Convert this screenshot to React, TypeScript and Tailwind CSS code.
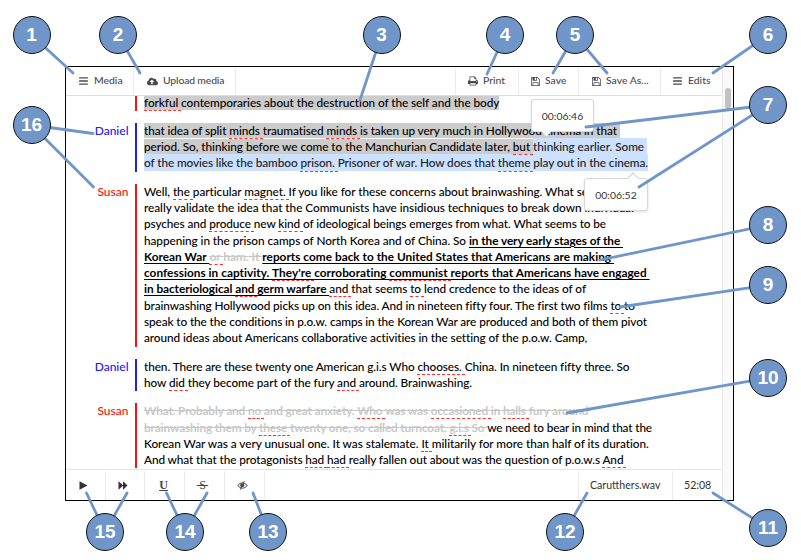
import React, { useLayoutEffect, useRef } from "react";
import { FaBars, FaCloudUploadAlt } from "react-icons/fa";

type Mark = "plain" | "err" | "read" | "readErr" | "sel" | "selErr" | "strong" | "strongErr" | "del" | "delErr";
type Line = { w?: number; runs: [Mark, string][] };
type Block = { who: "Daniel" | "Susan" | ""; lines: Line[] };

const markClass: Record<Mark, string> = {
  plain: "",
  err: "relative",
  read: "bg-[#cccccc]",
  readErr: "relative bg-[#cccccc]",
  sel: "bg-[#cce0ff] py-[1px] text-[#222]",
  selErr: "relative bg-[#cce0ff] py-[1px] text-[#222]",
  strong: "font-bold underline underline-offset-[1.5px] decoration-1",
  strongErr: "relative font-bold underline underline-offset-[1.5px] decoration-1",
  del: "font-bold text-[#c8c8c8] line-through",
  delErr: "relative font-bold text-[#c8c8c8] line-through",
};

const blocks: Block[] = [
  { who: "", lines: [{ w: 355.5, runs: [["readErr", "forkful "], ["read", "contemporaries about the destruction of the self and the body"]] }] },
  {
    who: "Daniel",
    lines: [
      { w: 476, runs: [["read", "that idea of split "], ["readErr", "minds "], ["read", "traumatised "], ["readErr", "minds "], ["read", "is taken up very much in Hollywood cinema in that "]] },
      { w: 503, runs: [["read", "period. So, thinking before we come to the Manchurian Candidate later, "], ["readErr", "but "], ["sel", "thinking earlier. Some "]] },
      { w: 504, runs: [["sel", "of the movies like the bamboo "], ["selErr", "prison. "], ["sel", "Prisoner of war. How does that "], ["selErr", "theme "], ["sel", "play out in the cinema."]] },
    ],
  },
  {
    who: "Susan",
    lines: [
      { w: 479, runs: [["plain", "Well, "], ["err", "the "], ["plain", "particular "], ["err", "magnet. "], ["plain", "If you like for these concerns about brainwashing. What seems to"]] },
      { w: 490, runs: [["plain", "really validate the idea that the Communists have insidious techniques to break down individual"]] },
      { w: 462, runs: [["plain", "psyches and "], ["err", "produce "], ["plain", "new "], ["err", "kind "], ["plain", "of ideological beings emerges from what. What seems to be"]] },
      { w: 479, runs: [["plain", "happening in the prison camps of North Korea and of China. So "], ["strong", "in the very early stages of the "]] },
      { w: 470, runs: [["strong", "Korean War "], ["delErr", "or "], ["del", "ham. It "], ["strong", "reports come back to the United States that Americans are making "]] },
      { w: 506, runs: [["strong", "confessions in captivity. "], ["strongErr", "They're "], ["strong", "corroborating "], ["strongErr", "communist "], ["strong", "reports that Americans have engaged "]] },
      { w: 442, runs: [["strong", "in bacteriological "], ["strongErr", "and "], ["strong", "germ warfare "], ["err", "and "], ["plain", "that seems "], ["err", "to "], ["plain", "lend credence to the ideas of of"]] },
      { w: 490, runs: [["plain", "brainwashing Hollywood picks up on this idea. And in nineteen fifty four. The first two films "], ["err", "to "], ["plain", "to"]] },
      { w: 503, runs: [["plain", "speak to the the conditions in p.o.w. camps in the Korean War are produced and both of them pivot"]] },
      { w: 443.5, runs: [["plain", "around ideas about Americans collaborative activities in the setting of the p.o.w. Camp,"]] },
    ],
  },
  {
    who: "Daniel",
    lines: [
      { w: 485, runs: [["plain", "then. There are these twenty one American g.i.s Who "], ["err", "chooses. "], ["plain", "China. In nineteen fifty three. So"]] },
      { w: 328, runs: [["plain", "how "], ["err", "did "], ["plain", "they become part of the fury "], ["err", "and "], ["plain", "around. Brainwashing."]] },
    ],
  },
  {
    who: "Susan",
    lines: [
      { w: 447, runs: [["del", "What. Probably and "], ["delErr", "no "], ["del", "and great anxiety. "], ["delErr", "Who "], ["del", "was was "], ["delErr", "occasioned "], ["del", "in "], ["delErr", "halls "], ["del", "fury around "]] },
      { w: 508, runs: [["del", "brainwashing them by "], ["delErr", "these "], ["del", "twenty one, so called turncoat. "], ["delErr", "g.i.s "], ["del", "So "], ["plain", "we need to bear in mind that the"]] },
      { w: 505, runs: [["plain", "Korean War was a very unusual one. It was stalemate. "], ["err", "It "], ["plain", "militarily for more than half of its duration."]] },
      { w: 482.5, runs: [["plain", "And what that the protagonists "], ["err", "had "], ["err", "had "], ["plain", "really fallen out about was the question of p.o.w.s "], ["err", "And "]] },
    ],
  },
];

// Each transcript line is tracked so that it fills its recorded width.
function TextLine({ line }: { line: Line }) {
  const ref = useRef<HTMLSpanElement>(null);
  useLayoutEffect(() => {
    const el = ref.current;
    if (!el || !line.w) return;
    const chars = line.runs.reduce((n, [, t]) => n + t.length, 0);
    el.style.letterSpacing = "0px";
    el.style.letterSpacing = `${(line.w - el.getBoundingClientRect().width) / chars}px`;
  }, [line]);
  return (
    <div className="h-[16.3px] whitespace-pre leading-[16px]">
      <span ref={ref}>
        {line.runs.map(([mark, text], i) => (
          <span key={i} className={markClass[mark]}>
            {text}
            {/err/i.test(mark) && <i className="absolute inset-x-0 -bottom-px z-10 border-b border-dashed border-[#ff3030]" />}
          </span>
        ))}
      </span>
    </div>
  );
}

const Save = () => (
  <svg viewBox="0 128 1536 1536" className="h-[9px] w-[9px]" fill="currentColor">
    <path d="M384 1536h768v-384h-768v384zM1280 1536h128v-896q0 -14 -10 -38.5t-20 -34.5l-281 -281q-10 -10 -34 -20t-39 -10v416q0 40 -28 68t-68 28h-576q-40 0 -68 -28t-28 -68v-416h-128v1280h128v-416q0 -40 28 -68t68 -28h832q40 0 68 28t28 68v416zM896 608v-320q0 -13 -9.5 -22.5t-22.5 -9.5h-192q-13 0 -22.5 9.5t-9.5 22.5v320q0 13 9.5 22.5t22.5 9.5h192q13 0 22.5 -9.5t9.5 -22.5zM1536 640v928q0 40 -28 68t-68 28h-1344q-40 0-68-28t-28-68v-1344q0-40 28-68t68-28h928q40 0 88 20t76 48l280 280q28 28 48 76t20 88z" />
  </svg>
);
const Print = () => (
  <svg viewBox="0 128 1664 1536" className="h-[10px] w-[10px]" fill="currentColor">
    <path d="M384 1536h896v-256h-896v256zM384 896h896v-384h-160q-40 0 -68 -28t-28 -68v-160h-640v640zM1536 960q0 -26 -19 -45t-45 -19t-45 19t-19 45t19 45t45 19t45 -19t19 -45zM1664 960v416q0 13 -9.5 22.5t-22.5 9.5h-224v160q0 40 -28 68t-68 28h-960q-40 0 -68 -28t-28 -68v-160h-224q-13 0 -22.5 -9.5t-9.5 -22.5v-416q0 -79 56.5 -135.5t135.5 -56.5h64v-544q0 -40 28 -68t68 -28h672q40 0 88 20t76 48l152 152q28 28 48 76t20 88v256h64q79 0 135.5 56.5t56.5 135.5z" />
  </svg>
);

function Item({ className, children }: { className: string; children: React.ReactNode }) {
  return <div className={`flex h-full shrink-0 items-center border-[#ececec] ${className}`}>{children}</div>;
}

type Callout = { n: number; x: number; y: number; to: [number, number][] };
const callouts: Callout[] = [
  { n: 1, x: 31.5, y: 35, to: [[73, 73]] },
  { n: 2, x: 118, y: 35, to: [[140, 73]] },
  { n: 3, x: 381.5, y: 35, to: [[360, 100]] },
  { n: 4, x: 505, y: 35, to: [[487, 74]] },
  { n: 5, x: 575, y: 35, to: [[553, 73], [607, 73]] },
  { n: 6, x: 768, y: 35, to: [[713, 73]] },
  { n: 7, x: 768, y: 105, to: [[586, 127], [639, 187]] },
  { n: 8, x: 768, y: 225, to: [[600, 260]] },
  { n: 9, x: 768, y: 285, to: [[620, 307]] },
  { n: 10, x: 768, y: 378, to: [[567, 413]] },
  { n: 11, x: 768, y: 528, to: [[713, 493]] },
  { n: 12, x: 565, y: 532, to: [[587, 493]] },
  { n: 13, x: 268, y: 532, to: [[253, 493]] },
  { n: 14, x: 185, y: 532, to: [[166.5, 493], [207, 493]] },
  { n: 15, x: 105, y: 532, to: [[86.5, 493], [127, 493]] },
  { n: 16, x: 31.5, y: 125, to: [[93, 133.5], [93.5, 187]] },
];

export default function App() {
  return (
    <div className="relative h-[560px] w-[801px] overflow-hidden bg-white pl-[65px] pt-[66px] font-['Lato',sans-serif]">
      <div className="flex h-[435px] w-[669px] border border-black">
        <div className="flex w-[656px] flex-col">
          <div className="flex h-[29px] shrink-0 border-b border-[#dedede] text-[10.4px] font-medium text-[#4a4a4a]">
            <Item className="w-[68px] border-r pl-[13px]"><FaBars className="mr-[6px] h-[10px] w-[9px]" />Media</Item>
            <Item className="w-[102px] border-r pl-[13px]"><FaCloudUploadAlt className="mr-[5px] h-[11px] w-[11px]" /><span className="tracking-[-0.15px]">Upload media</span></Item>
            <div className="flex-1" />
            <Item className="w-[63px] border-l pl-[12px]"><Print /><span className="ml-[5px]">Print</span></Item>
            <Item className="w-[60px] border-l pl-[12px]"><Save /><span className="ml-[5px]">Save</span></Item>
            <Item className="w-[82px] border-l pl-[13px]"><Save /><span className="ml-[5px]">Save As...</span></Item>
            <Item className="w-[62px] border-l pl-[12px]"><FaBars className="mr-[6px] h-[10px] w-[9px]" />Edits</Item>
          </div>
          <div className="flex flex-1 flex-col gap-[12px] overflow-hidden text-[11.8px] font-medium text-black">
            {blocks.map((b, i) => (
              <div key={i} className={`flex shrink-0 ${i === 0 ? "-mt-[1.5px]" : ""}`}>
                <div className={`w-[69px] shrink-0 pr-[6.5px] text-right text-[12px] leading-[16px] ${b.who === "Daniel" ? "text-[#2020f0]" : "text-[#ff1010]"}`}>{b.who}</div>
                <div className={`border-l-2 pl-[7px] ${b.who === "Daniel" ? "border-[#2020e0]" : "border-[#ee1515]"}`}>
                  {b.lines.map((l, j) => <TextLine key={j} line={l} />)}
                </div>
              </div>
            ))}
          </div>
          <div className="flex h-[31px] shrink-0 border-t border-[#e4e4e4] bg-white pt-px text-[10.6px] text-[#333]">
            <Item className="w-[40px] border-r pl-[13px]">
              <svg viewBox="0 0 9 9" className="h-[9px] w-[9px]" fill="#333"><path d="M.5.3 8.5 4.5.5 8.7z" /></svg>
            </Item>
            <Item className="w-[39px] border-r pl-[12px]">
              <svg viewBox="0 0 10 9" className="h-[9px] w-[10px]" fill="#333"><path d="M.5.3 5 4.3V.3L9.5 4.5 5 8.7v-4L.5 8.7z" /></svg>
            </Item>
            <Item className="w-[40px] justify-center border-r pb-[2px] pr-[2px] font-['Liberation_Serif',serif] text-[12px] text-[#444]"><span className="font-bold underline decoration-1 underline-offset-1">U</span></Item>
            <Item className="w-[40px] justify-center border-r pb-[2px] pr-[4px] font-['Liberation_Serif',serif] text-[12px] text-[#444]"><span className="whitespace-pre line-through decoration-1">{"\u2009S\u2009"}</span></Item>
            <Item className="w-[40px] justify-center border-r pr-[4px]">
              <svg viewBox="0 0 11 9" className="h-[9px] w-[11px]" fill="none" stroke="#444"><path d="M.7 4.5Q5.5-1 10.3 4.5 5.5 10 .7 4.5" /><circle cx="5.2" cy="4.2" r="2" fill="#444" stroke="none" /><path d="M7.3.3l-4 8.4" /></svg>
            </Item>
            <div className="flex-1" />
            <Item className="w-[94px] border-l pl-[11px]">Carutthers.wav</Item>
            <Item className="w-[50px] border-l pl-[11px]">52:08</Item>
          </div>
        </div>
        <div className="flex w-[11px] flex-col items-center border-l border-[#e8e8e8] bg-[#fafafa] pt-[21px]">
          <div className="h-[21px] w-[6px] rounded-full bg-[#c1c1c1]" />
        </div>
      </div>

      <div className="absolute left-[531px] top-[99px] z-20 flex h-[33px] w-[63px] items-center justify-center rounded-[3px] border border-[#d8d8d8] bg-white pt-[2px] text-[10.4px] text-[#333] shadow-sm">
        00:06:46
        <div className="absolute -bottom-[4px] left-[11px] h-[7px] w-[7px] rotate-45 bg-white" />
      </div>
      <div className="absolute left-[584px] top-[178px] z-20 flex h-[33px] w-[64px] items-center justify-center rounded-[3px] border border-[#d8d8d8] bg-white pt-[2px] text-[10.4px] text-[#333] shadow-sm">
        00:06:52
        <div className="absolute -top-[5px] right-[10px] h-[8px] w-[8px] rotate-45 border-l border-t border-[#d0d0d0] bg-white" />
      </div>

      <svg className="absolute inset-0 z-30 h-[560px] w-[801px]" stroke="#7096c9" strokeWidth="2.8" strokeLinecap="round">
        {callouts.flatMap((c) => c.to.map(([x, y], i) => <line key={`${c.n}-${i}`} x1={c.x} y1={c.y} x2={x} y2={y} />))}
      </svg>
      {callouts.map((c) => (
        <div
          key={c.n}
          className="absolute z-40 flex h-[38px] w-[38px] -translate-x-1/2 -translate-y-1/2 items-center justify-center rounded-full border border-[#111] bg-[#7096c9] font-['Liberation_Sans',sans-serif] text-[19px] font-bold text-white"
          style={{ left: c.x, top: c.y }}
        >
          {c.n}
        </div>
      ))}
    </div>
  );
}
